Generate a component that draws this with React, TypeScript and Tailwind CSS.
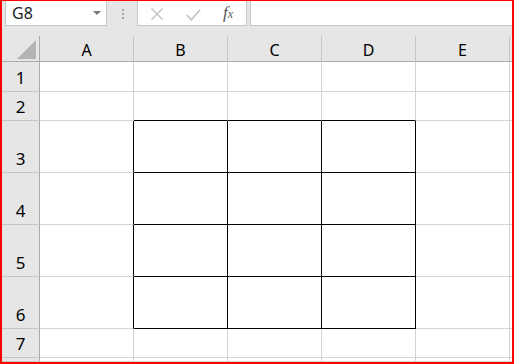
import React from "react";

const cols = ["A", "B", "C", "D", "E"];
const rows = [
  { n: "1", h: 30 },
  { n: "2", h: 29 },
  { n: "3", h: 52 },
  { n: "4", h: 52 },
  { n: "5", h: 52 },
  { n: "6", h: 52 },
  { n: "7", h: 29 },
  { n: "", h: 4 },
];

function inBox(r: number, c: number) {
  return r >= 2 && r <= 5 && c >= 1 && c <= 3;
}

export default function App() {
  const rowTemplate = ["26px", ...rows.map((r) => `${r.h}px`)].join(" ");
  const cells: React.ReactNode[] = [];
  cells.push(
    <div key="corner" className="relative border-r border-b border-r-[#ababab] border-b-[#ababab] bg-[#e6e6e6]">
      <svg className="absolute left-[15px] top-[4px]" width="19" height="19" viewBox="0 0 19 19">
        <polygon points="19,0 19,19 0,19" fill="#b3b3b3" />
      </svg>
    </div>
  );
  cols.forEach((c) => {
    cells.push(
      <div
        key={"h" + c}
        className="flex items-center justify-center border-r border-b border-r-[#c6c6c6] border-b-[#ababab] bg-[#e6e6e6] text-[16px] leading-[20px] text-black pt-[2px]"
      >
        {c}
      </div>
    );
  });
  cells.push(<div key="hrest" className="border-b border-b-[#ababab] bg-[#e6e6e6]" />);

  rows.forEach((row, r) => {
    cells.push(
      <div
        key={"r" + r}
        className="flex items-end justify-center overflow-hidden border-r border-b border-r-[#ababab] border-b-[#c6c6c6] bg-[#e6e6e6] text-[17px] leading-[20px] text-black pb-[3px]"
      >
        {row.n}
      </div>
    );
    cols.forEach((_, c) => {
      const rightBlack = inBox(r, c) || inBox(r, c + 1);
      const bottomBlack = inBox(r, c) || inBox(r + 1, c);
      cells.push(
        <div
          key={`c${r}-${c}`}
          className={`bg-white border-r border-b ${rightBlack ? "border-r-black" : "border-r-[#d4d4d4]"} ${
            bottomBlack ? "border-b-black" : "border-b-[#d4d4d4]"
          }`}
        />
      );
    });
    cells.push(<div key={"rest" + r} className="bg-white border-b border-b-[#d4d4d4]" />);
  });

  return (
    <div className="w-[514px] h-[364px] overflow-hidden border-l-2 border-t border-r-2 border-b-2 border-[#ff0000] bg-[#e6e6e6] flex flex-col font-['Noto_Sans',sans-serif]">
      <div className="h-[35px] shrink-0 flex items-start">
        <div className="ml-[3px] w-[102px] h-[25px] bg-white border-x border-b border-[#c6c6c6] flex items-center justify-between pl-[6px] pr-[5px]">
          <span className="text-[16px] leading-[20px] text-[#222]">G8</span>
          <svg width="8" height="4" viewBox="0 0 8 4">
            <polygon points="0,0 8,0 4,4" fill="#777" />
          </svg>
        </div>
        <div className="ml-[15px] mt-[8px] flex flex-col gap-[2px]">
          <div className="w-[2px] h-[2px] bg-[#a6a6a6]" />
          <div className="w-[2px] h-[2px] bg-[#a6a6a6]" />
          <div className="w-[2px] h-[2px] bg-[#a6a6a6]" />
        </div>
        <div className="ml-[13px] w-[110px] h-[25px] bg-white border-x border-b border-[#c6c6c6] relative">
          <svg className="absolute left-[13px] top-[7px]" width="12" height="12" viewBox="0 0 12 12">
            <path d="M0.5 0.5 L11.5 11.5 M11.5 0.5 L0.5 11.5" stroke="#c4c4c4" strokeWidth="1.5" />
          </svg>
          <svg className="absolute left-[48px] top-[8px]" width="15" height="12" viewBox="0 0 15 12">
            <path d="M0.8 6 L5.2 10.8 L14.2 0.8" stroke="#c4c4c4" strokeWidth="1.7" fill="none" />
          </svg>
          <span className="absolute left-[85px] top-[2px] text-[17px] leading-[20px] italic text-[#555] font-['Liberation_Serif',serif]">
            f<span className="text-[12px]">x</span>
          </span>
        </div>
        <div className="ml-[3px] flex-1 h-[25px] bg-white border-l border-b border-[#c6c6c6]" />
      </div>
      <div
        className="grid flex-1"
        style={{ gridTemplateColumns: "38px 94px 94px 94px 94px 94px 2px", gridTemplateRows: rowTemplate }}
      >
        {cells}
      </div>
    </div>
  );
}
